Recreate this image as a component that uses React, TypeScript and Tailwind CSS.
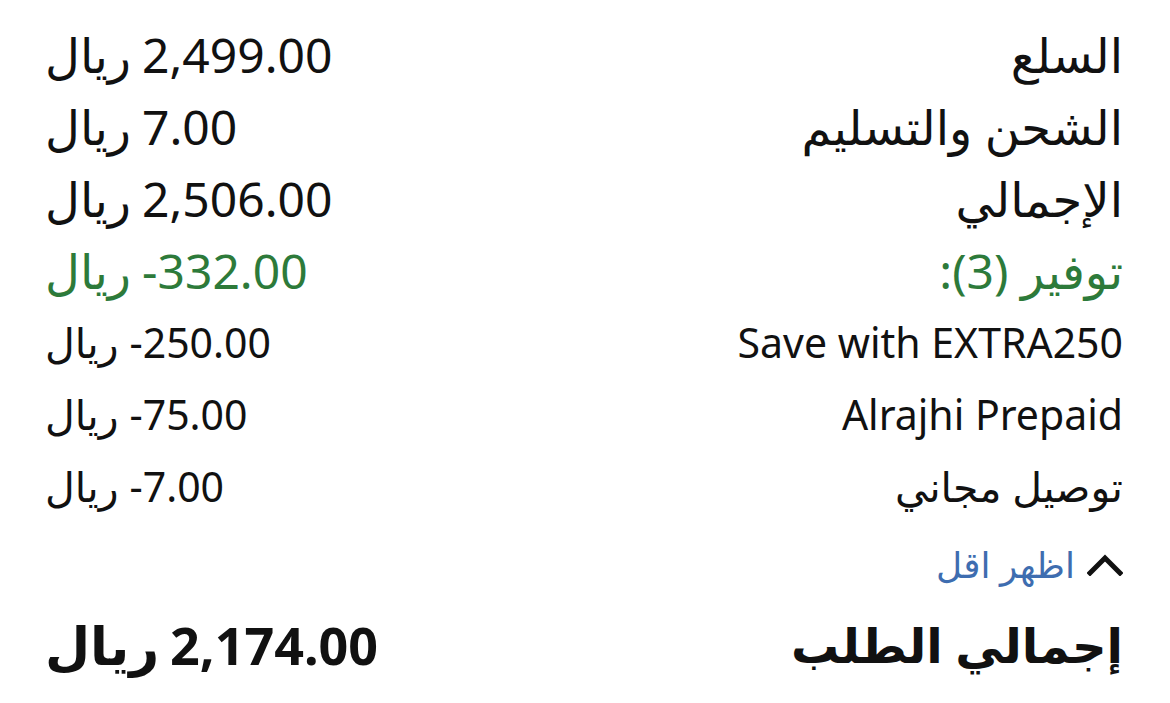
import type { ReactNode } from 'react';

type Line = { label: string; amount: string; tone?: 'green' };

const top: Line[] = [
  { label: 'السلع', amount: '2,499.00' },
  { label: 'الشحن والتسليم', amount: '7.00' },
  { label: 'الإجمالي', amount: '2,506.00' },
  { label: 'توفير (3):', amount: '-332.00', tone: 'green' },
];

const savings: Line[] = [
  { label: 'Save with EXTRA250', amount: '-250.00' },
  { label: 'Alrajhi Prepaid', amount: '-75.00' },
  { label: 'توصيل مجاني', amount: '-7.00' },
];

// المبلغ دائماً: "ريال" على اليسار ثم الرقم
function Amount({ value, className }: { value: string; className: string }) {
  return (
    <span dir="ltr" className={`flex items-baseline gap-[11px] ${className}`}>
      <span>ريال</span>
      <span>{value}</span>
    </span>
  );
}

function Row({ children }: { children: ReactNode }) {
  return <div className="flex h-[72px] items-center justify-between">{children}</div>;
}

export default function App() {
  return (
    <div
      dir="rtl"
      className="flex h-[703px] w-[1170px] flex-col bg-white pt-[19px] pr-[47px] pl-[45px] text-[#111111]"
      style={{ fontFamily: '"Noto Sans", "DejaVu Sans", sans-serif' }}
    >
      {top.map((l) => (
        <Row key={l.label}>
          <span className={`text-[48px] ${l.tone === 'green' ? 'text-[#2d7a3a]' : ''}`}>{l.label}</span>
          <Amount
            value={l.amount}
            className={`text-[48px] ${l.tone === 'green' ? 'text-[#2d7a3a]' : ''}`}
          />
        </Row>
      ))}
      {savings.map((l) => (
        <Row key={l.label}>
          <span className="text-[41px]">{l.label}</span>
          <Amount value={l.amount} className="text-[41px]" />
        </Row>
      ))}
      <div className="mt-[6px] flex h-[72px] items-center gap-[12px]">
        <svg width="36" height="22" viewBox="0 0 36 22" fill="none">
          <path d="M3 19 L18 4 L33 19" stroke="#111" strokeWidth="5" strokeLinecap="square" />
        </svg>
        <span className="text-[36px] text-[#3e6db0]">اظهر اقل</span>
      </div>
      <div className="mt-[4px] flex h-[80px] items-center justify-between font-bold">
        <span className="text-[48px]">إجمالي الطلب</span>
        <Amount value="2,174.00" className="text-[52px]" />
      </div>
    </div>
  );
}
